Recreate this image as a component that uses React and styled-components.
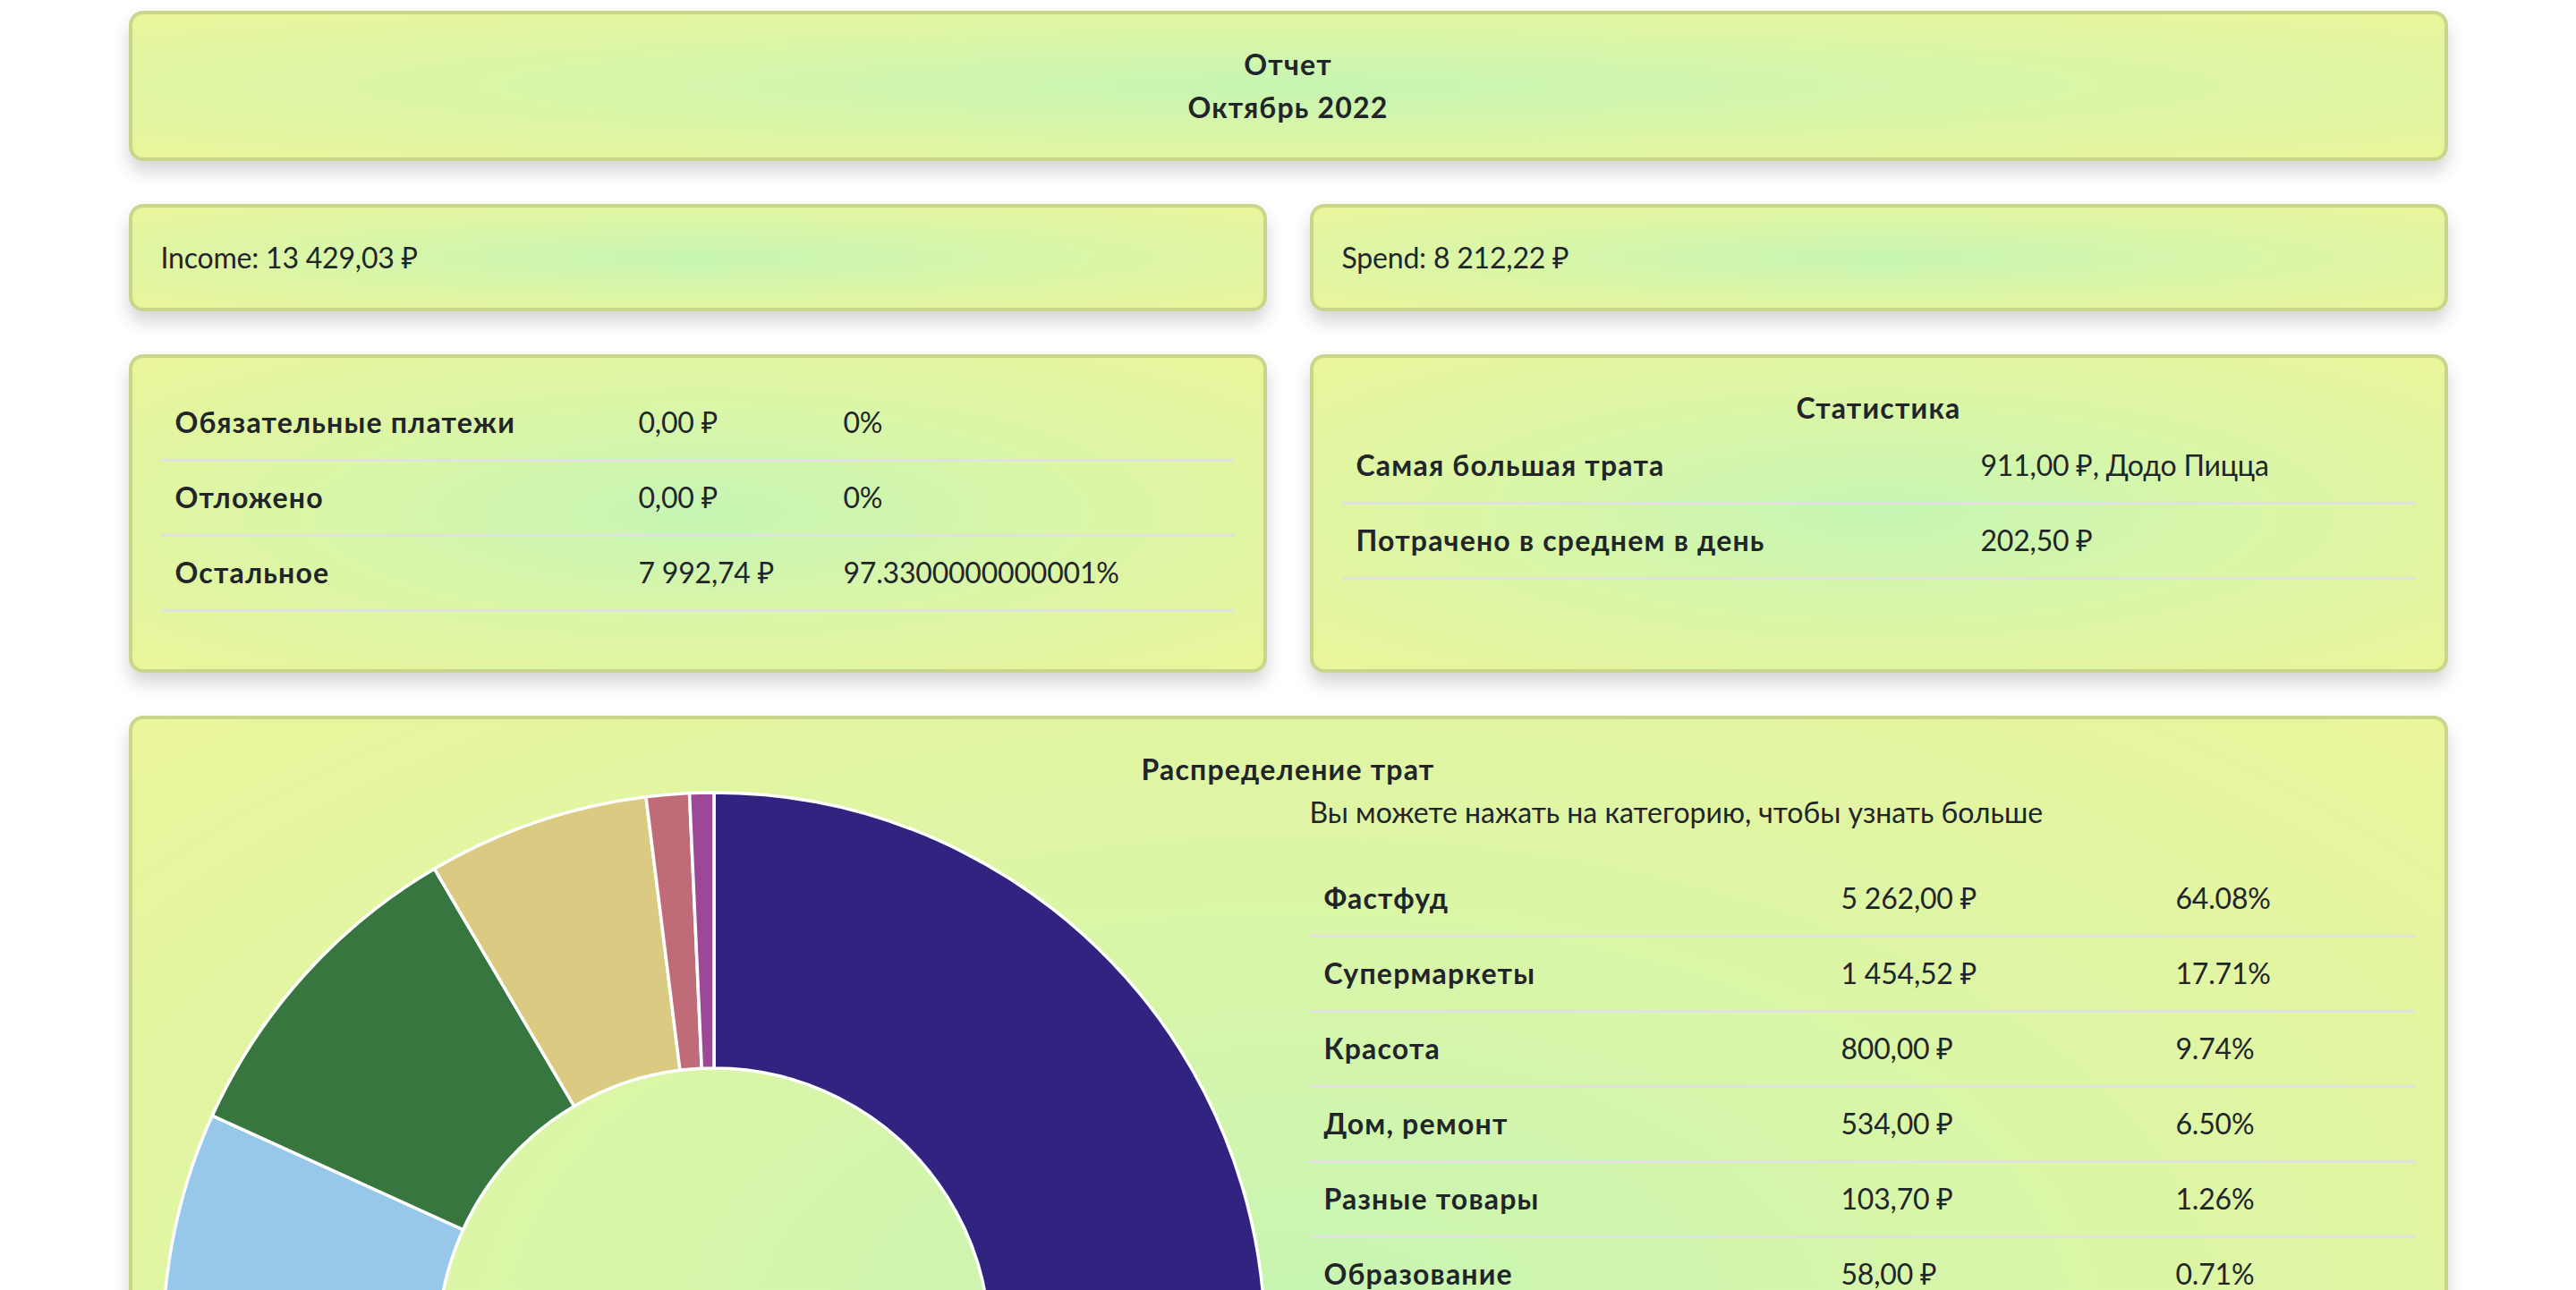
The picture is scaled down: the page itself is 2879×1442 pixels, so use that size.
import React from 'react'
import styled, { createGlobalStyle } from 'styled-components'

const GlobalStyle = createGlobalStyle`
  html {
    scrollbar-width: none;
  }
  html::-webkit-scrollbar {
    display: none;
  }
  body {
    margin: 0;
    background: #ffffff;
    color: #212529;
    font-family: Lato, "Noto Sans", "Liberation Sans", sans-serif;
    font-size: 32px;
    line-height: 48px;
    letter-spacing: -0.2px;
  }
`

const Page = styled.div`
  width: 2592px;
  margin: 0 auto;
  padding-top: 12px;
  display: flex;
  flex-direction: column;
  gap: 48px;
`

const Card = styled.div`
  box-sizing: border-box;
  border: 4px solid #c9d58b;
  border-radius: 16px;
  padding: 32px;
  background: radial-gradient(#c6f5b3 0%, #d9f6a8 45%, #ebf59b 100%);
  box-shadow: 0 12px 20px rgba(0, 0, 0, 0.17);
  min-height: ${(p) => p.minHeight || 'auto'};
`

const Row = styled.div`
  display: grid;
  grid-template-columns: minmax(0, 1fr) minmax(0, 1fr);
  gap: 48px;
`

const Heading = styled.div`
  font-weight: 700;
  letter-spacing: 1.2px;
  text-align: center;
`

const Table = styled.table`
  width: 100%;
  border-collapse: collapse;
  table-layout: fixed;
  margin-top: ${(p) => p.mt || '0'};
  margin-bottom: ${(p) => p.mb || '0'};
`

const Caption = styled.caption`
  font-weight: 700;
  letter-spacing: 1.2px;
  text-align: center;
`

const Tr = styled.tr`
  border-bottom: 3px solid #dfe1e2;
`

const Th = styled.th`
  text-align: left;
  font-weight: 700;
  letter-spacing: 1.2px;
  padding: 16px 16px 17px;
  white-space: nowrap;
`

const Td = styled.td`
  padding: 16px 16px 17px;
  white-space: nowrap;
`

const ChartLayout = styled.div`
  display: grid;
  grid-template-columns: minmax(0, 1fr) minmax(0, 1fr);
  gap: 48px;
`

const ChartBox = styled.div`
  width: 100%;
  aspect-ratio: 1 / 1;
`

const Hint = styled.div`
  font-weight: 400;
  letter-spacing: 0;
`

const essentials = [
  ['Обязательные платежи', '0,00 ₽', '0%'],
  ['Отложено', '0,00 ₽', '0%'],
  ['Остальное', '7 992,74 ₽', '97.3300000000001%'],
]

const stats = [
  ['Самая большая трата', '911,00 ₽, Додо Пицца'],
  ['Потрачено в среднем в день', '202,50 ₽'],
]

const categories = [
  { name: 'Фастфуд', sum: '5 262,00 ₽', pct: 64.08, color: '#312380' },
  { name: 'Супермаркеты', sum: '1 454,52 ₽', pct: 17.71, color: '#97c8e9' },
  { name: 'Красота', sum: '800,00 ₽', pct: 9.74, color: '#37763e' },
  { name: 'Дом, ремонт', sum: '534,00 ₽', pct: 6.5, color: '#dbca82' },
  { name: 'Разные товары', sum: '103,70 ₽', pct: 1.26, color: '#c06c78' },
  { name: 'Образование', sum: '58,00 ₽', pct: 0.71, color: '#9c4896' },
]

function point(cx, cy, radius, angle) {
  return [cx + radius * Math.sin(angle), cy - radius * Math.cos(angle)]
}

function Doughnut({ data }) {
  const size = 1236
  const c = size / 2
  const R = 616
  const r = 308
  const total = data.reduce((s, d) => s + d.pct, 0)
  let start = 0
  const slices = data.map((d) => {
    const sweep = (d.pct / total) * Math.PI * 2
    const end = start + sweep
    const large = sweep > Math.PI ? 1 : 0
    const [x1, y1] = point(c, c, R, start)
    const [x2, y2] = point(c, c, R, end)
    const [x3, y3] = point(c, c, r, end)
    const [x4, y4] = point(c, c, r, start)
    const path = `M${x1} ${y1} A${R} ${R} 0 ${large} 1 ${x2} ${y2} L${x3} ${y3} A${r} ${r} 0 ${large} 0 ${x4} ${y4} Z`
    start = end
    return <path key={d.name} d={path} fill={d.color} stroke="#ffffff" strokeWidth="3.5" strokeLinejoin="round" />
  })
  return (
    <svg width="100%" height="100%" viewBox={`0 0 ${size} ${size}`}>
      {slices}
    </svg>
  )
}

export default function App() {
  return (
    <>
      <GlobalStyle />
      <Page>
        <Card>
          <Heading>Отчет</Heading>
          <Heading>Октябрь 2022</Heading>
        </Card>

        <Row>
          <Card>Income: 13 429,03 ₽</Card>
          <Card>Spend: 8 212,22 ₽</Card>
        </Row>

        <Row>
          <Card minHeight="356px">
            <Table mb="32px">
              <colgroup>
                <col style={{ width: '518px' }} />
                <col style={{ width: '229px' }} />
                <col />
              </colgroup>
              <tbody>
                {essentials.map(([name, sum, pct]) => (
                  <Tr key={name}>
                    <Th>{name}</Th>
                    <Td>{sum}</Td>
                    <Td>{pct}</Td>
                  </Tr>
                ))}
              </tbody>
            </Table>
          </Card>
          <Card minHeight="356px">
            <Table>
              <Caption>Статистика</Caption>
              <colgroup>
                <col style={{ width: '698px' }} />
                <col />
              </colgroup>
              <tbody>
                {stats.map(([name, value]) => (
                  <Tr key={name}>
                    <Th>{name}</Th>
                    <Td>{value}</Td>
                  </Tr>
                ))}
              </tbody>
            </Table>
          </Card>
        </Row>

        <Card>
          <Heading>Распределение трат</Heading>
          <ChartLayout>
            <ChartBox>
              <Doughnut data={categories} />
            </ChartBox>
            <div>
              <Hint>Вы можете нажать на категорию, чтобы узнать больше</Hint>
              <Table mt="32px">
                <colgroup>
                  <col style={{ width: '578px' }} />
                  <col style={{ width: '374px' }} />
                  <col />
                </colgroup>
                <tbody>
                  {categories.map((c) => (
                    <Tr key={c.name}>
                      <Th>{c.name}</Th>
                      <Td>{c.sum}</Td>
                      <Td>{c.pct.toFixed(2)}%</Td>
                    </Tr>
                  ))}
                </tbody>
              </Table>
            </div>
          </ChartLayout>
        </Card>
      </Page>
    </>
  )
}
